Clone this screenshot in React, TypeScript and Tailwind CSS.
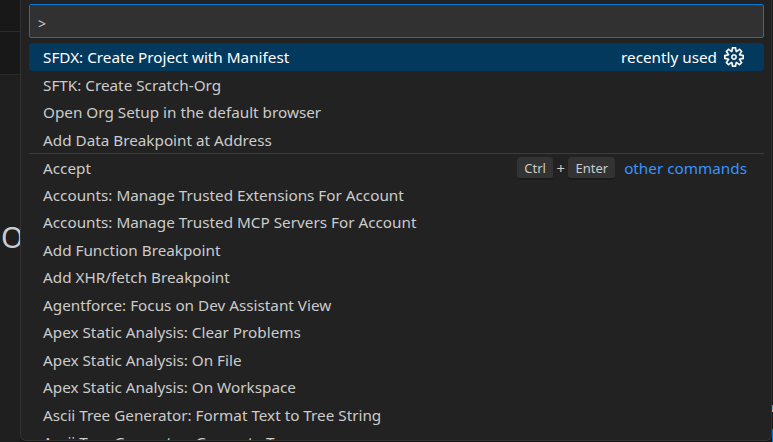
import { VscSettingsGear } from 'react-icons/vsc';

const topRows = [
  'SFTK: Create Scratch-Org',
  'Open Org Setup in the default browser',
  'Add Data Breakpoint at Address',
];

const otherRows = [
  'Accounts: Manage Trusted Extensions For Account',
  'Accounts: Manage Trusted MCP Servers For Account',
  'Add Function Breakpoint',
  'Add XHR/fetch Breakpoint',
  'Agentforce: Focus on Dev Assistant View',
  'Apex Static Analysis: Clear Problems',
  'Apex Static Analysis: On File',
  'Apex Static Analysis: On Workspace',
  'Ascii Tree Generator: Format Text to Tree String',
  'Ascii Tree Generator: Generate Tree',
];

function Key({ label }: { label: string }) {
  return (
    <span className="flex h-[23px] items-center rounded-[4px] border-b-2 border-b-[#1b1b1b] bg-[#333333] px-[7px] pt-[2px] text-[13px] text-[#cccccc]">
      {label}
    </span>
  );
}

function Row({ label }: { label: string }) {
  return (
    <div className="flex h-[27.5px] items-center truncate px-[14px] pt-[2px] text-[#cccccc]">{label}</div>
  );
}

export default function App() {
  return (
    <div className="relative flex h-[442px] w-[773px] overflow-hidden bg-[#181818] text-[15.27px] [font-family:'Noto_Sans',sans-serif]">
      {/* editor behind the palette */}
      <div className="flex w-[20px] shrink-0 flex-col overflow-hidden">
        <div className="h-[32px] shrink-0 border-b border-[#2b2b2b]" />
        <div className="h-[43px] shrink-0 border-b border-[#2b2b2b]" />
        <div className="flex-1 bg-[#1f1f1f] pl-[1px] pt-[147px]">
          <span className="block text-[29px] leading-none text-[#cccccc]">O</span>
        </div>
      </div>

      <div className="flex h-[441px] w-[752px] shrink-0 flex-col overflow-hidden rounded-b-[6px] border-x border-b border-[#333333] bg-[#222222] pl-[8px] pr-[7px] pt-[4px]">
        <div className="flex h-[34px] shrink-0 items-center rounded-[2px] border border-[#0078d4] bg-[#313131] px-[8px] pt-[4px] text-[14px] text-[#cccccc]">
          &gt;
        </div>

        <div className="mt-[5px] flex flex-col">
          <div className="flex h-[27.5px] items-center justify-between rounded-[4px] bg-[#04395e] pl-[14px] pr-[20px] pt-[1px] text-white">
            <span>SFDX: Create Project with Manifest</span>
            <span className="flex items-center gap-[7px]">
              recently used
              <VscSettingsGear size={20} color="#ffffff" className="stroke-white [stroke-width:0.3]" />
            </span>
          </div>
          {topRows.map((r) => (
            <Row key={r} label={r} />
          ))}

          <div className="flex h-[27.5px] items-center justify-between border-t border-[#3c3c3c] pl-[14px] pr-[17px] pt-[2px] text-[#cccccc]">
            <span>Accept</span>
            <span className="flex items-center">
              <Key label="Ctrl" />
              <span className="mx-[3.5px] text-[15px]">+</span>
              <Key label="Enter" />
              <span className="ml-[9px] text-[#3794ff]">other commands</span>
            </span>
          </div>
          {otherRows.map((r) => (
            <Row key={r} label={r} />
          ))}
        </div>
      </div>

      {/* sliver of the window behind, at the right edge */}
      <div className="absolute right-0 top-[405px] h-[5px] w-[1px] bg-[#6f9fc0]" />
      <div className="absolute right-0 top-[410px] h-[2px] w-[1px] bg-[#c9b78a]" />
      <div className="absolute right-0 top-[429px] h-[13px] w-[1px] bg-[#0078d4]" />
    </div>
  );
}
